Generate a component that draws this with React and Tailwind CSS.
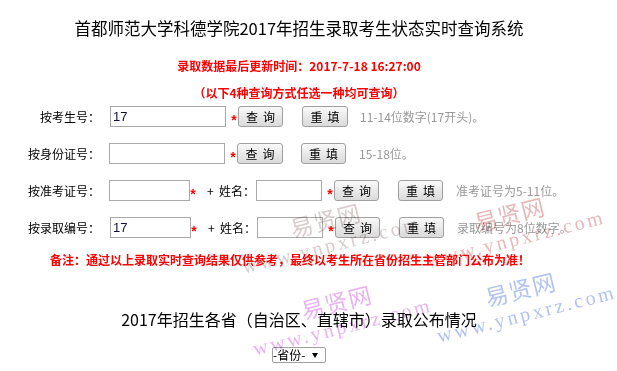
function Input({ className, value }) {
  return (
    <div
      className={`h-[21px] border border-[#a9a9a9] bg-white pl-[2px] flex items-center font-['Liberation_Sans',sans-serif] text-[13px] leading-none text-[#10103a] ${className}`}
    >
      {value}
    </div>
  );
}

function Star({ className }) {
  return (
    <div
      className={`w-[6px] h-[21px] flex items-center justify-center font-['Liberation_Sans',sans-serif] font-bold text-[14px] leading-none text-[#ff0000] ${className}`}
    >
      <span className="translate-y-[3px]">*</span>
    </div>
  );
}

function Btn({ a, b, className }) {
  return (
    <div
      className={`h-[21px] flex items-center justify-center gap-[5px] rounded-[3px] border border-[#a0a0a0] bg-linear-to-b from-[#f9f9f9] to-[#dadada] text-[12px] leading-none text-black ${className}`}
    >
      <span>{a}</span>
      <span>{b}</span>
    </div>
  );
}

function Hint({ children, className }) {
  return (
    <div className={`text-[12px] leading-none text-[#999999] whitespace-nowrap ${className}`}>
      {children}
    </div>
  );
}

function Label({ children }) {
  return <div className="w-[100px] text-right text-[12px] leading-none text-black">{children}</div>;
}

function Mark({ className, top, bottom }) {
  return (
    <div
      className={`pointer-events-none absolute -translate-x-1/2 -translate-y-1/2 rotate-[-14deg] flex flex-col items-center whitespace-nowrap mix-blend-multiply ${className}`}
    >
      <div className={`text-[23px] leading-[30px] tracking-[1px] ${top}`}>易贤网</div>
      <div className={`font-['Liberation_Serif',serif] text-[20px] leading-[22px] tracking-[3px] ${bottom}`}>
        www.ynpxrz.com
      </div>
    </div>
  );
}

export default function App() {
  return (
    <div className="relative w-[617px] h-[371px] overflow-hidden bg-white text-black font-['Noto_Sans_CJK_SC','Liberation_Sans',sans-serif]">
      <div className="w-[598px] flex flex-col">
        <div className="h-[57px] flex items-center justify-center text-[16.5px] leading-none whitespace-nowrap">
          首都师范大学科德学院2017年招生录取考生状态实时查询系统
        </div>
        <div className="h-[18px] flex items-center justify-center text-[12px] font-bold leading-none text-[#ff0000] whitespace-nowrap">
          录取数据最后更新时间：<span>2017-7-18 16:27:00</span>
        </div>
        <div className="mt-[9px] h-[18px] flex items-center justify-center text-[12px] font-bold leading-none text-[#ff0000] whitespace-nowrap">
          （以下4种查询方式任选一种均可查询）
        </div>

        {/* row 1 */}
        <div className="mt-[4px] h-[21px] flex items-center">
          <Label>按考生号：</Label>
          <Input className="ml-[10px] w-[116px]" value="17" />
          <Star className="ml-[5px]" />
          <Btn className="ml-[1px] w-[45px]" a="查" b="询" />
          <Btn className="ml-[19px] w-[46px]" a="重" b="填" />
          <Hint className="ml-[12px]">11-14位数字(17开头)。</Hint>
        </div>

        {/* row 2 */}
        <div className="mt-[16px] h-[21px] flex items-center">
          <Label>按身份证号：</Label>
          <Input className="ml-[9px] w-[116px]" value="" />
          <Star className="ml-[5px]" />
          <Btn className="ml-[1px] w-[46px]" a="查" b="询" />
          <Btn className="ml-[18px] w-[45px]" a="重" b="填" />
          <Hint className="ml-[13px]">15-18位。</Hint>
        </div>

        {/* row 3 */}
        <div className="mt-[16px] h-[21px] flex items-center">
          <Label>按准考证号：</Label>
          <Input className="ml-[9px] w-[81px]" value="" />
          <Star />
          <div className="ml-[11px] w-[6px] text-center text-[12px] leading-none">+</div>
          <div className="ml-[6px] w-[36px] text-[12px] leading-none whitespace-nowrap">姓名：</div>
          <Input className="ml-[1px] w-[66px]" value="" />
          <Star className="ml-[5px]" />
          <Btn className="ml-[1px] w-[45px]" a="查" b="询" />
          <Btn className="ml-[19px] w-[45px]" a="重" b="填" />
          <Hint className="ml-[13px]">准考证号为5-11位。</Hint>
        </div>

        {/* row 4 */}
        <div className="mt-[16px] h-[21px] flex items-center">
          <Label>按录取编号：</Label>
          <Input className="ml-[10px] w-[81px]" value="17" />
          <Star />
          <div className="ml-[11px] w-[6px] text-center text-[12px] leading-none">+</div>
          <div className="ml-[6px] w-[36px] text-[12px] leading-none whitespace-nowrap">姓名：</div>
          <Input className="ml-[1px] w-[66px]" value="" />
          <Star className="ml-[5px]" />
          <Btn className="ml-[1px] w-[45px]" a="查" b="询" />
          <Btn className="ml-[19px] w-[45px]" a="重" b="填" />
          <Hint className="ml-[13px]">录取编号为8位数字。</Hint>
        </div>

        <div className="mt-[13px] h-[18px] flex items-center pl-[50px] text-[12px] font-bold leading-none text-[#ff0000] whitespace-nowrap">
          备注：通过以上录取实时查询结果仅供参考，最终以考生所在省份招生主管部门公布为准！
        </div>

        <div className="mt-[40px] h-[19px] flex items-center justify-center text-[16px] leading-none whitespace-nowrap">
          2017年招生各省（自治区、直辖市）录取公布情况
        </div>

        <div className="mt-[19px] flex justify-center">
          <div className="w-[54px] h-[16px] border border-[#a0a0a0] rounded-[2px] bg-white flex items-center text-[12px] leading-none">
            <span>-省份-</span>
            <svg className="ml-auto mr-[7px]" width="6" height="5" viewBox="0 0 6 5">
              <polygon points="0,0 6,0 3,5" fill="#000" />
            </svg>
          </div>
        </div>
      </div>

      <Mark className="left-[328px] top-[230px]" top="text-[#d8cccc]" bottom="text-[#d8cccc]" />
      <Mark className="left-[512px] top-[224px]" top="text-[#e8b8b8]" bottom="text-[#e8b8b8]" />
      <Mark className="left-[339px] top-[312px]" top="text-[#e9b3f3]" bottom="text-[#e9b3f3]" />
      <Mark className="left-[523px] top-[299px]" top="text-[#b1c3f0]" bottom="text-[#b1c3f0]" />
    </div>
  );
}
